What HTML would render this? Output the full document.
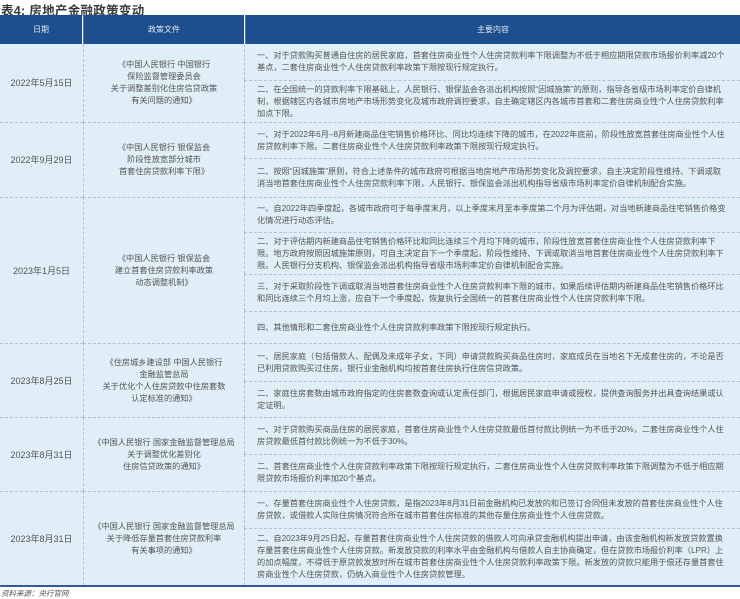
<!DOCTYPE html>
<html><head><meta charset="utf-8"><style>
*{margin:0;padding:0;box-sizing:border-box}
body{width:740px;height:598px;background:#fff;position:relative;overflow:hidden;font-family:"Liberation Sans","Noto Sans CJK SC",sans-serif;color:#555}
.t{position:absolute;left:1px;top:0;font-size:12.5px;font-weight:bold;color:#3a3a3a;letter-spacing:0.3px}
.h{position:absolute;top:15px;height:29px;background:#1d4e8d;color:#dfe6f0;font-size:8px;display:flex;align-items:center;justify-content:center}
.c{position:absolute;background:#e0eef8;display:flex;align-items:center;font-size:8.2px;line-height:12px}
.d{justify-content:center;text-align:center;font-size:9px;color:#555}
.p{justify-content:center;text-align:center;font-size:8.2px}
.m{padding-left:12px;padding-right:12px}
.bl{border-top:1px dashed #b5c3cf}
.vl{border-left:1px dashed #b5c3cf}
.src{position:absolute;left:1px;top:588px;font-size:7.5px;font-style:italic;color:#555}
.bot{position:absolute;left:0;top:585px;width:740px;height:2px;background:#2c5d9a}
</style></head><body>
<div class="t">表4: 房地产金融政策变动</div>
<div class="h" style="left:0;width:82px">日期</div>
<div class="h" style="left:83px;width:161px;border-left:1px solid #4f76a8">政策文件</div>
<div class="h" style="left:245px;width:495px;border-left:1px solid #4f76a8">主要内容</div>

<div class="c d" style="left:0;top:44px;width:83px;height:78px">2022年5月15日</div>
<div class="c p vl" style="left:83px;top:44px;width:161px;height:78px">《中国人民银行 中国银行<br>保险监督管理委员会<br>关于调整差别化住房信贷政策<br>有关问题的通知》</div>
<div class="c m vl" style="left:244px;top:44px;width:496px;height:36px">一、对于贷款购买普通自住房的居民家庭，首套住房商业性个人住房贷款利率下限调整为不低于相应期限贷款市场报价利率减20个基点，二套住房商业性个人住房贷款利率政策下限按现行规定执行。</div>
<div class="c m vl bl" style="left:244px;top:80px;width:496px;height:42px">二、在全国统一的贷款利率下限基础上，人民银行、银保监会各派出机构按照“因城施策”的原则，指导各省级市场利率定价自律机制，根据辖区内各城市房地产市场形势变化及城市政府调控要求，自主确定辖区内各城市首套和二套住房商业性个人住房贷款利率加点下限。</div>

<div class="c d bl" style="left:0;top:122px;width:83px;height:75px">2022年9月29日</div>
<div class="c p vl bl" style="left:83px;top:122px;width:161px;height:75px">《中国人民银行 银保监会<br>阶段性放宽部分城市<br>首套住房贷款利率下限》</div>
<div class="c m vl bl" style="left:244px;top:122px;width:496px;height:36px">一、对于2022年6月–8月新建商品住宅销售价格环比、同比均连续下降的城市，在2022年底前，阶段性放宽首套住房商业性个人住房贷款利率下限。二套住房商业性个人住房贷款利率政策下限按现行规定执行。</div>
<div class="c m vl bl" style="left:244px;top:158px;width:496px;height:39px">二、按照“因城施策”原则，符合上述条件的城市政府可根据当地房地产市场形势变化及调控要求，自主决定阶段性维持、下调或取消当地首套住房商业性个人住房贷款利率下限，人民银行、银保监会派出机构指导省级市场利率定价自律机制配合实施。</div>

<div class="c d bl" style="left:0;top:197px;width:83px;height:146px">2023年1月5日</div>
<div class="c p vl bl" style="left:83px;top:197px;width:161px;height:146px">《中国人民银行 银保监会<br>建立首套住房贷款利率政策<br>动态调整机制》</div>
<div class="c m vl bl" style="left:244px;top:197px;width:496px;height:35px">一、自2022年四季度起，各城市政府可于每季度末月，以上季度末月至本季度第二个月为评估期，对当地新建商品住宅销售价格变化情况进行动态评估。</div>
<div class="c m vl bl" style="left:244px;top:232px;width:496px;height:42px">二、对于评估期内新建商品住宅销售价格环比和同比连续三个月均下降的城市，阶段性放宽首套住房商业性个人住房贷款利率下限。地方政府按照因城施策原则，可自主决定自下一个季度起，阶段性维持、下调或取消当地首套住房商业性个人住房贷款利率下限。人民银行分支机构、银保监会派出机构指导省级市场利率定价自律机制配合实施。</div>
<div class="c m vl bl" style="left:244px;top:274px;width:496px;height:37px">三、对于采取阶段性下调或取消当地首套住房商业性个人住房贷款利率下限的城市，如果后续评估期内新建商品住宅销售价格环比和同比连续三个月均上涨，应自下一个季度起，恢复执行全国统一的首套住房商业性个人住房贷款利率下限。</div>
<div class="c m vl bl" style="left:244px;top:311px;width:496px;height:32px">四、其他情形和二套住房商业性个人住房贷款利率政策下限按现行规定执行。</div>

<div class="c d bl" style="left:0;top:343px;width:83px;height:74px">2023年8月25日</div>
<div class="c p vl bl" style="left:83px;top:343px;width:161px;height:74px">《住房城乡建设部 中国人民银行<br>金融监管总局<br>关于优化个人住房贷款中住房套数<br>认定标准的通知》</div>
<div class="c m vl bl" style="left:244px;top:343px;width:496px;height:38px">一、居民家庭（包括借款人、配偶及未成年子女，下同）申请贷款购买商品住房时，家庭成员在当地名下无成套住房的，不论是否已利用贷款购买过住房，银行业金融机构均按首套住房执行住房信贷政策。</div>
<div class="c m vl bl" style="left:244px;top:381px;width:496px;height:36px">二、家庭住房套数由城市政府指定的住房套数查询或认定责任部门，根据居民家庭申请或授权，提供查询服务并出具查询结果或认定证明。</div>

<div class="c d bl" style="left:0;top:417px;width:83px;height:74px">2023年8月31日</div>
<div class="c p vl bl" style="left:83px;top:417px;width:161px;height:74px">《中国人民银行 国家金融监督管理总局<br>关于调整优化差别化<br>住房信贷政策的通知》</div>
<div class="c m vl bl" style="left:244px;top:417px;width:496px;height:37px">一、对于贷款购买商品住房的居民家庭，首套住房商业性个人住房贷款最低首付款比例统一为不低于20%，二套住房商业性个人住房贷款最低首付款比例统一为不低于30%。</div>
<div class="c m vl bl" style="left:244px;top:454px;width:496px;height:37px">二、首套住房商业性个人住房贷款利率政策下限按现行规定执行，二套住房商业性个人住房贷款利率政策下限调整为不低于相应期限贷款市场报价利率加20个基点。</div>

<div class="c d bl" style="left:0;top:491px;width:83px;height:94px">2023年8月31日</div>
<div class="c p vl bl" style="left:83px;top:491px;width:161px;height:94px">《中国人民银行 国家金融监督管理总局<br>关于降低存量首套住房贷款利率<br>有关事项的通知》</div>
<div class="c m vl bl" style="left:244px;top:491px;width:496px;height:37px">一、存量首套住房商业性个人住房贷款，是指2023年8月31日前金融机构已发放的和已签订合同但未发放的首套住房商业性个人住房贷款，或借款人实际住房情况符合所在城市首套住房标准的其他存量住房商业性个人住房贷款。</div>
<div class="c m vl bl" style="left:244px;top:528px;width:496px;height:57px">二、自2023年9月25日起，存量首套住房商业性个人住房贷款的借款人可向承贷金融机构提出申请，由该金融机构新发放贷款置换存量首套住房商业性个人住房贷款。新发放贷款的利率水平由金融机构与借款人自主协商确定，但在贷款市场报价利率（LPR）上的加点幅度，不得低于原贷款发放时所在城市首套住房商业性个人住房贷款利率政策下限。新发放的贷款只能用于偿还存量首套住房商业性个人住房贷款，仍纳入商业性个人住房贷款管理。</div>
<div class="bot"></div>
<div class="src">资料来源：央行官网</div>
</body></html>
